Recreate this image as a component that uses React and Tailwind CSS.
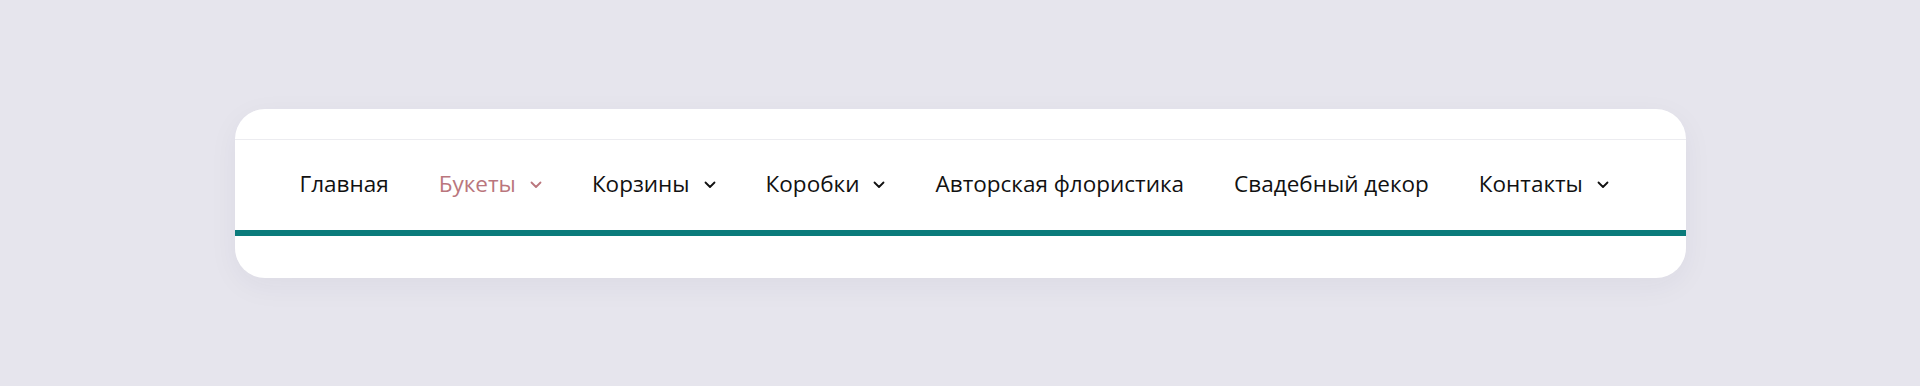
import React from "react";

function Chevron({ className }) {
  return (
    <svg width="12" height="8" viewBox="0 0 12 8" fill="none" className={className}>
      <path d="M1.5 1.5 L6 6 L10.5 1.5" stroke="currentColor" strokeWidth="1.8" strokeLinecap="round" strokeLinejoin="round" />
    </svg>
  );
}

const items = [
  { label: "Главная" },
  { label: "Букеты", dd: true, active: true },
  { label: "Корзины", dd: true },
  { label: "Коробки", dd: true },
  { label: "Авторская флористика" },
  { label: "Свадебный декор" },
  { label: "Контакты", dd: true },
];

export default function App() {
  return (
    <div className="h-[386px] w-full bg-[#e6e5ed] flex items-center justify-center" style={{ fontFamily: '"Open Sans", sans-serif' }}>
      <div className="w-[1451px] rounded-[30px] bg-white overflow-hidden shadow-[0_8px_30px_rgba(40,30,80,0.05)] flex flex-col">
        <div className="h-[31px] border-b border-[#ececf0]" />
        <nav className="h-[90px] flex items-center pl-[65px] pb-[1px] gap-[50px]">
          {items.map((it) => (
            <a
              key={it.label}
              className={`flex items-center gap-[14px] text-[22.5px] leading-[30px] ${it.active ? "text-[#ba767d]" : "text-[#111111]"}`}
            >
              <span>{it.label}</span>
              {it.dd && <Chevron className="mt-[2px]" />}
            </a>
          ))}
        </nav>
        <div className="h-[6px] bg-[#0b7b7b]" />
        <div className="h-[42px]" />
      </div>
    </div>
  );
}
